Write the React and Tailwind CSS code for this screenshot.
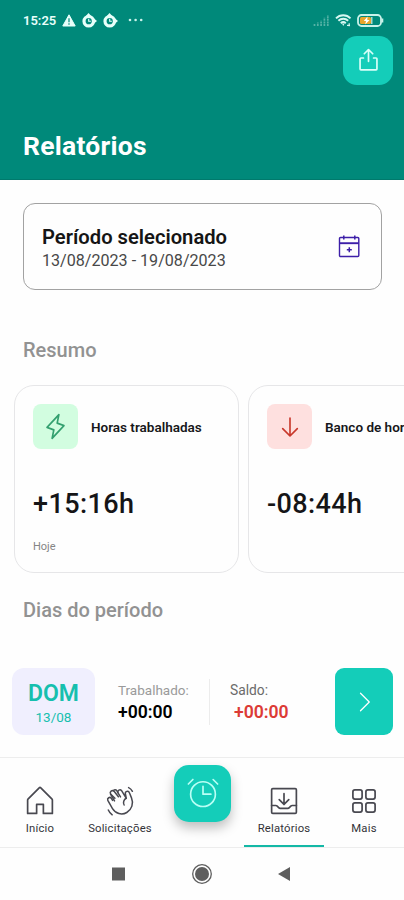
import {
  PiAlarmLight,
  PiArrowDown,
  PiCaretRightLight,
  PiExport,
  PiHouseLight,
  PiLightning,
} from 'react-icons/pi';

const CalendarPlusIcon = () => (
  <svg width="24" height="24" viewBox="0 0 24 24" fill="none" stroke="#3d1fa8" strokeWidth="1.4">
    <rect x="2.5" y="2.5" width="19.3" height="19" rx="1" />
    <path d="M2.5 8.2h19.3" strokeWidth="1.9" />
    <path d="M6.8 .5v4M17.8 .5v4" strokeWidth="1.5" />
    <path d="M12.3 12.3v5M9.8 14.8h5" strokeWidth="1.5" />
  </svg>
);

const WavingHandIcon = ({ className }) => (
  <svg
    className={className}
    viewBox="0 0 36 36"
    fill="none"
    stroke="currentColor"
    strokeWidth="1.5"
    strokeLinecap="round"
    strokeLinejoin="round"
  >
    <path d="M10.6 17.4L9.4 15.300a2.100 2.100 0 0 0-3.600 2.100L10.500 25.600c3 5.100 9.300 6.800 14.300 3.900s7-9.200 4.700-14.600l-2.100-5.200a2.100 2.100 0 0 0-4 1.300l.9 4.300L19.600 7.700a2.100 2.100 0 0 0-3.600 2.100" />
    <path d="M12.900 15.300L8.600 11.100a2.300 2.300 0 0 1 3.500-2.900l4.300 5.600" />
    <path d="M18.500 13.900L16 9.800l-1.200-2.100a2.100 2.100 0 0 0-3.600.2" />
    <path d="M8.600 11.100l3.900 6.800" />
    <path d="M24.300 15.300a4.800 4.800 0 0 0-2.200 6.700" />
    <path d="M26.600 4.600c1.700.8 2.900 2 3.800 3.700M6.300 27c.9 2.100 2.100 3.500 3.900 4.800" />
  </svg>
);

const TrayIcon = ({ className }) => (
  <svg
    className={className}
    viewBox="0 0 256 256"
    fill="none"
    stroke="currentColor"
    strokeWidth="12"
    strokeLinecap="round"
    strokeLinejoin="round"
  >
    <rect x="40" y="40" width="176" height="176" rx="8" />
    <path d="M128 76v76M94 118l34 34 34-34" />
    <path d="M40 160h30c5 0 7 2 10 5l10 10c3 3 6 5 10 5h56c4 0 7-2 10-5l10-10c3-3 5-5 10-5h30" />
  </svg>
);

const GridIcon = ({ className }) => (
  <svg className={className} viewBox="0 0 36 36" fill="none" stroke="currentColor" strokeWidth="1.7">
    <rect x="6.9" y="6.9" width="9.2" height="9.2" rx="2" />
    <rect x="19.9" y="6.9" width="9.2" height="9.2" rx="2" />
    <rect x="6.9" y="19.9" width="9.2" height="9.2" rx="2" />
    <rect x="19.9" y="19.9" width="9.2" height="9.2" rx="2" />
  </svg>
);

const StopwatchIcon = () => (
  <svg width="15" height="15" viewBox="0 0 15 15" fill="none">
    <path d="M6.5 0l3.2 3.5H3.4z" fill="#e8fffa" />
    <circle cx="6.7" cy="8.2" r="4.7" stroke="#e8fffa" strokeWidth="3.2" fill="#00897a" />
    <path d="M6.7 5.8v2.5h2.2" stroke="#e8fffa" strokeWidth="1.1" />
    <path d="M12 5.5l3 2.5-3 2.5z" fill="#e8fffa" />
  </svg>
);

// ── Barra de estado ─────────────────────────────────────────────────────────
const StatusBar = () => (
  <div className="flex h-9 items-center justify-between pt-1 pl-[23px] pr-5">
    <div className="flex items-center">
      <span className="text-[13px] font-semibold leading-none text-[#e8fffa]">15:25</span>
      <svg className="ml-[6px]" width="14" height="13" viewBox="0 0 14 13">
        <path d="M7 .8L13.2 12H.8z" fill="#e8fffa" stroke="#e8fffa" strokeLinejoin="round" />
        <path d="M7 4.2v4M7 9.3v1.4" stroke="#00897a" strokeWidth="1.2" />
      </svg>
      <span className="ml-[6px]"><StopwatchIcon /></span>
      <span className="ml-[6px]"><StopwatchIcon /></span>
      <svg className="ml-[10px]" width="16" height="4" viewBox="0 0 16 4" fill="#c9f2ea">
        <circle cx="2" cy="2" r="1.3" />
        <circle cx="7.6" cy="2" r="1.3" />
        <circle cx="13.2" cy="2" r="1.3" />
      </svg>
    </div>
    <div className="flex items-center">
      <svg width="17" height="12" viewBox="0 0 17 12" stroke="#56b3a6" strokeWidth="1.7">
        <path d="M1.5 12v-2M4.8 12V8.5M8.1 12V6.5M11.4 12V3.8M14.8 12V1" strokeDasharray="2 .6" />
      </svg>
      <svg className="ml-[5px]" width="17" height="13" viewBox="0 0 17 13" fill="none" stroke="#d6f7f1" strokeWidth="1.9">
        <path d="M1 4.3C5 .2 11.5 .2 15.5 4.3M3.4 6.8c2.8-2.7 7-2.7 9.8 0M5.8 9.2c1.5-1.4 3.5-1.4 5 0" />
        <path d="M7 9.5h2.6L8.3 12z" fill="#d6f7f1" stroke="none" />
        <path d="M12 11.3h3M14.2 9.2v3" strokeWidth="1.2" />
      </svg>
      <svg className="ml-[5px]" width="27" height="13" viewBox="0 0 27 13" fill="none">
        <rect x="1" y="1" width="23" height="11" rx="3.5" stroke="#c9f2ea" strokeWidth="1.8" />
        <rect x="3" y="3" width="11" height="7" rx="1.5" fill="#eaa52c" />
        <path d="M10.5 2.5L6.8 7H9l-.8 3.5L12.6 6h-2.3z" fill="#fff" />
        <path d="M14.8 3v7" stroke="#c9f2ea" strokeWidth="1.2" />
        <path d="M25.3 4.5v4" stroke="#c9f2ea" strokeWidth="2" />
      </svg>
    </div>
  </div>
);

// ── Tarjeta de resumen ──────────────────────────────────────────────────────
const SummaryCard = ({ icon, iconClass, title, value, note }) => (
  <div className="h-[188px] w-[225px] shrink-0 rounded-[20px] border-[1.5px] border-[#e6e6e8] pt-[18px] pl-[18px]">
    <div className="flex items-center">
      <div className={`flex size-[45px] items-center justify-center rounded-lg ${iconClass}`}>{icon}</div>
      <span className="ml-[13px] whitespace-nowrap pt-0.5 text-[13.5px] font-semibold text-[#17171a]">{title}</span>
    </div>
    <p className="mt-[39px] text-[27px] font-medium leading-8 tracking-[0.4px] text-[#151517]">{value}</p>
    {note && <p className="mt-[19px] text-[11px] leading-4 text-[#858585]">{note}</p>}
  </div>
);

// ── Item de navegación ──────────────────────────────────────────────────────
const NavItem = ({ icon: Icon, label, active }) => (
  <div
    className={`flex h-[89px] w-20 shrink-0 flex-col items-center border-b-[2.5px] pt-[25px] ${
      active ? 'border-[#14b8a6]' : 'border-transparent'
    }`}
  >
    <Icon className="size-9 shrink-0 text-[#484850]" />
    <span className="mt-0.5 text-[11.3px] leading-4 tracking-[0.2px] text-[#333338]">{label}</span>
  </div>
);

export default function App() {
  return (
    <div className="flex h-[900px] w-[404px] flex-col overflow-hidden bg-[#fefefe] font-['Roboto',sans-serif]">
      <header className="h-[180px] shrink-0 border-b border-[#00796c] bg-[#00897a]">
        <StatusBar />
        <div className="flex justify-end pr-[11px]">
          <button className="flex h-[49px] w-[50px] items-center justify-center rounded-[14px] bg-[#14cdb9] text-[#d9fff9]">
            <PiExport className="size-[27px]" />
          </button>
        </div>
        <h1 className="mt-[45px] pl-[23px] text-[26.5px] font-bold leading-8 tracking-[0.25px] text-white">Relatórios</h1>
      </header>

      <main className="flex flex-1 flex-col">
        <section className="mr-[22px] ml-[23px] mt-[23px] flex h-[87px] items-center justify-between rounded-xl border border-[#a2a2a2] pl-[18px] pr-5">
          <div className="pt-[5px]">
            <h2 className="text-[20.2px] font-semibold leading-6 text-[#151515]">Período selecionado</h2>
            <p className="text-[16.1px] leading-6 text-[#484848]">13/08/2023 - 19/08/2023</p>
          </div>
          <CalendarPlusIcon />
        </section>

        <h3 className="mt-12 pl-[23px] text-[20px] font-medium leading-6 text-[#929292]">Resumo</h3>
        <div className="mt-[23px] flex gap-[9px] overflow-hidden pl-3.5">
          <SummaryCard
            icon={<PiLightning className="size-[27px] text-[#33a06f]" />}
            iconClass="bg-[#d2fde0]"
            title="Horas trabalhadas"
            value="+15:16h"
            note="Hoje"
          />
          <SummaryCard
            icon={<PiArrowDown className="size-[26px] text-[#c8382c]" />}
            iconClass="bg-[#fee0df]"
            title="Banco de horas"
            value="-08:44h"
          />
        </div>

        <h3 className="mt-[25px] pl-[23px] text-[20px] font-medium leading-6 text-[#929292]">Dias do período</h3>
        <div className="mt-[46px] flex h-[67px] items-center pl-3">
          <div className="flex h-[67px] w-[83px] flex-col items-center justify-center rounded-xl bg-[#f0effe] pt-1.5 text-[#16bfae]">
            <span className="text-[23px] font-semibold leading-6">DOM</span>
            <span className="text-[13.5px] leading-[22px]">13/08</span>
          </div>
          <div className="ml-[23px] w-[91px]">
            <p className="text-[13.5px] leading-5 text-[#9a9a9a]">Trabalhado:</p>
            <p className="text-[17.6px] font-semibold leading-6 text-black">+00:00</p>
          </div>
          <div className="h-[46px] w-px bg-[#ececec]" />
          <div className="ml-5 w-[105px]">
            <p className="text-[13.8px] leading-5 text-[#6b6b6b]">Saldo:</p>
            <p className="pl-1 text-[17.6px] font-semibold leading-6 text-[#dc3b36]">+00:00</p>
          </div>
          <button className="flex h-[67px] w-[58px] items-center justify-center rounded-[9px] bg-[#14cdb9] text-white">
            <PiCaretRightLight className="size-7" />
          </button>
        </div>
      </main>

      <nav className="flex h-[91px] shrink-0 border-y border-[#ededed]">
        <NavItem icon={PiHouseLight} label="Início" />
        <NavItem icon={WavingHandIcon} label="Solicitações" />
        <button className="mr-[13px] ml-3.5 mt-[7px] flex size-[57px] shrink-0 items-center justify-center rounded-[15px] bg-[#14cdb9] pb-0.5 text-[#b9fff5] shadow-[0_6px_12px_rgba(0,0,0,0.25)]">
          <PiAlarmLight className="size-9" />
        </button>
        <NavItem icon={TrayIcon} label="Relatórios" active />
        <NavItem icon={GridIcon} label="Mais" />
      </nav>

      {/* Botones do sistema */}
      <div className="flex h-[52px] shrink-0 items-center justify-center">
        <svg width="190" height="24" viewBox="0 0 190 24" fill="#5e5e5e">
          <rect x="5" y="5.5" width="13" height="13" />
          <circle cx="95" cy="12" r="7" />
          <circle cx="95" cy="12" r="9.3" fill="none" stroke="#5e5e5e" strokeWidth="1.3" />
          <path d="M171 12l12-7v14z" />
        </svg>
      </div>
    </div>
  );
}
